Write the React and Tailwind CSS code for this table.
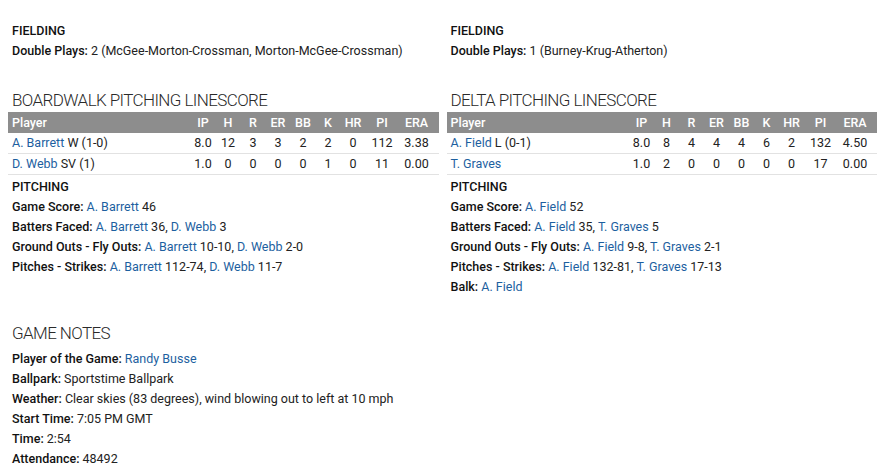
const linkCls = 'text-[#1d5f9f]';

const statCols = [
	{ key: 'ip', label: 'IP', w: 'w-[25px]' },
	{ key: 'h', label: 'H', w: 'w-[25px]' },
	{ key: 'r', label: 'R', w: 'w-[25px]' },
	{ key: 'er', label: 'ER', w: 'w-[25px]' },
	{ key: 'bb', label: 'BB', w: 'w-[25px]' },
	{ key: 'k', label: 'K', w: 'w-[25px]' },
	{ key: 'hr', label: 'HR', w: 'w-[25px]' },
	{ key: 'pi', label: 'PI', w: 'w-[33px]' },
	{ key: 'era', label: 'ERA', w: 'w-[36px]' },
];

const teams = [
	{
		fielding: '2 (McGee-Morton-Crossman, Morton-McGee-Crossman)',
		title: 'Boardwalk Pitching Linescore',
		pitchers: [
			{ name: 'A. Barrett', note: 'W (1-0)', ip: '8.0', h: 12, r: 3, er: 3, bb: 2, k: 2, hr: 0, pi: 112, era: '3.38' },
			{ name: 'D. Webb', note: 'SV (1)', ip: '1.0', h: 0, r: 0, er: 0, bb: 0, k: 1, hr: 0, pi: 11, era: '0.00' },
		],
		pitching: [
			{ label: 'Game Score', items: [['A. Barrett', '46']] },
			{ label: 'Batters Faced', items: [['A. Barrett', '36'], ['D. Webb', '3']] },
			{ label: 'Ground Outs - Fly Outs', items: [['A. Barrett', '10-10'], ['D. Webb', '2-0']] },
			{ label: 'Pitches - Strikes', items: [['A. Barrett', '112-74'], ['D. Webb', '11-7']] },
		],
	},
	{
		fielding: '1 (Burney-Krug-Atherton)',
		title: 'Delta Pitching Linescore',
		pitchers: [
			{ name: 'A. Field', note: 'L (0-1)', ip: '8.0', h: 8, r: 4, er: 4, bb: 4, k: 6, hr: 2, pi: 132, era: '4.50' },
			{ name: 'T. Graves', note: '', ip: '1.0', h: 2, r: 0, er: 0, bb: 0, k: 0, hr: 0, pi: 17, era: '0.00' },
		],
		pitching: [
			{ label: 'Game Score', items: [['A. Field', '52']] },
			{ label: 'Batters Faced', items: [['A. Field', '35'], ['T. Graves', '5']] },
			{ label: 'Ground Outs - Fly Outs', items: [['A. Field', '9-8'], ['T. Graves', '2-1']] },
			{ label: 'Pitches - Strikes', items: [['A. Field', '132-81'], ['T. Graves', '17-13']] },
			{ label: 'Balk', items: [['A. Field', '']] },
		],
	},
];

const Label = ({ children }) => <span className="font-medium text-[#111]">{children}: </span>;

const TeamColumn = ({ team }) => (
	<div className="flex flex-col">
		{/* fielding */}
		<div className="px-1">
			<div className="font-medium text-[#111]">FIELDING</div>
			<div>
				<Label>Double Plays</Label>
				{team.fielding}
			</div>
		</div>
		<h2 className="mt-[27px] px-1 h-6 leading-6 text-[17px] font-light uppercase tracking-[-0.6px] text-[#2a2a2a]">
			{team.title}
		</h2>
		{/* linescore table */}
		<div className="flex h-[21px] items-center bg-[#8d8d8d] px-1 text-white font-medium">
			<div className="flex-1">Player</div>
			{statCols.map((col) => (
				<div key={col.key} className={`${col.w} text-center`}>
					{col.label}
				</div>
			))}
		</div>
		{team.pitchers.map((p) => (
			<div key={p.name} className="flex h-[21px] items-center border-b border-[#e2e2e2] px-1">
				<div className="flex-1">
					<span className={linkCls}>{p.name}</span>
					{p.note && ` ${p.note}`}
				</div>
				{statCols.map((col) => (
					<div key={col.key} className={`${col.w} text-center`}>
						{p[col.key]}
					</div>
				))}
			</div>
		))}
		{/* pitching notes */}
		<div className="mt-[2px] px-1">
			<div className="font-medium text-[#111]">PITCHING</div>
			{team.pitching.map((row) => (
				<div key={row.label}>
					<Label>{row.label}</Label>
					{row.items.map(([name, val], i) => (
						<span key={name}>
							<span className={linkCls}>{name}</span>
							{val && ` ${val}`}
							{i < row.items.length - 1 && ', '}
						</span>
					))}
				</div>
			))}
		</div>
	</div>
);

const notes = [
	{ label: 'Ballpark', value: 'Sportstime Ballpark' },
	{ label: 'Weather', value: 'Clear skies (83 degrees), wind blowing out to left at 10 mph' },
	{ label: 'Start Time', value: '7:05 PM GMT' },
	{ label: 'Time', value: '2:54' },
	{ label: 'Attendance', value: '48492' },
];

const App = () => {
	return (
		<div className="min-h-[475px] bg-white px-2 pt-[21px] text-[12.5px] leading-5 text-[#222] font-['Roboto',sans-serif]">
			<div className="grid grid-cols-2 gap-x-2">
				{teams.map((team) => (
					<TeamColumn key={team.title} team={team} />
				))}
			</div>
			{/* game notes */}
			<div className="mt-6 px-1">
				<h2 className="h-6 leading-6 text-[17px] font-light uppercase tracking-[-0.6px] text-[#2a2a2a] mb-1">Game Notes</h2>
				<div>
					<Label>Player of the Game</Label>
					<span className={linkCls}>Randy Busse</span>
				</div>
				{notes.map((n) => (
					<div key={n.label}>
						<Label>{n.label}</Label>
						{n.value}
					</div>
				))}
			</div>
		</div>
	);
};

export default App;
